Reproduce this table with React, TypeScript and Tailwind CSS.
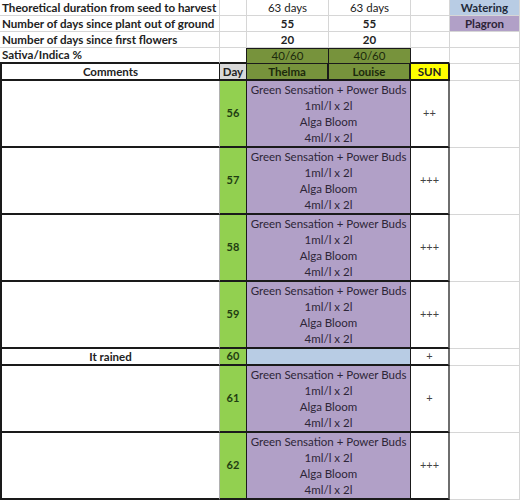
import React from "react";

const GL = "border-[#d6d6d6]";

function Dose() {
  return (
    <div className="flex flex-col items-center leading-[16px] whitespace-nowrap">
      <span>Green Sensation + Power Buds</span>
      <span>1ml/l x 2l</span>
      <span>Alga Bloom</span>
      <span>4ml/l x 2l</span>
    </div>
  );
}

type Row = { day: number; comment?: string; sun: string; rain?: boolean };

const rows: Row[] = [
  { day: 56, sun: "++" },
  { day: 57, sun: "+++" },
  { day: 58, sun: "+++" },
  { day: 59, sun: "+++" },
  { day: 60, sun: "+", comment: "It rained", rain: true },
  { day: 61, sun: "+" },
  { day: 62, sun: "+++" },
];

export default function App() {
  return (
    <div
      className="w-[520px] h-[500px] overflow-hidden bg-white text-[11.5px] text-[#222]"
      style={{ fontFamily: "Lato, 'Liberation Sans', sans-serif" }}
    >
      <div className="grid grid-cols-[220px_27px_82px_82px_39px_70px] grid-rows-[16px_16px_16px_16px_17px_67px_67px_67px_67px_17px_67px_67px]">
        {/* Row 1 */}
        <div className={`border-b border-r ${GL} pl-[2px] font-bold leading-[15px] whitespace-nowrap text-[11.6px]`}>Theoretical duration from seed to harvest</div>
        <div className={`border-b border-r ${GL}`} />
        <div className={`border-b border-r ${GL} flex items-center justify-center`}>63 days</div>
        <div className={`border-b border-r ${GL} flex items-center justify-center`}>63 days</div>
        <div className={`border-b border-r ${GL}`} />
        <div className={`border-b border-r ${GL} bg-[#b8cce4] flex items-center justify-center font-bold text-[#1f2a3a]`}>Watering</div>
        {/* Row 2 */}
        <div className={`border-b border-r ${GL} pl-[2px] font-bold leading-[15px] whitespace-nowrap text-[11.6px]`}>Number of days since plant out of ground</div>
        <div className={`border-b border-r ${GL}`} />
        <div className={`border-b border-r ${GL} flex items-center justify-center font-bold`}>55</div>
        <div className={`border-b border-r ${GL} flex items-center justify-center font-bold`}>55</div>
        <div className={`border-b border-r ${GL}`} />
        <div className={`border-b border-r ${GL} bg-[#b1a0c7] flex items-center justify-center font-bold text-[#2d2438]`}>Plagron</div>
        {/* Row 3 */}
        <div className={`border-b border-r ${GL} pl-[2px] font-bold leading-[15px] whitespace-nowrap text-[11.6px]`}>Number of days since first flowers</div>
        <div className={`border-b border-r ${GL}`} />
        <div className={`border-b border-r ${GL} flex items-center justify-center font-bold`}>20</div>
        <div className={`border-b border-r ${GL} flex items-center justify-center font-bold`}>20</div>
        <div className={`border-b border-r ${GL}`} />
        <div className={`border-b border-r ${GL}`} />
        {/* Row 4 */}
        <div className="border-b-2 border-r border-b-[#1a1a1a] border-r-[#d6d6d6] pl-[2px] font-bold leading-[14px] whitespace-nowrap text-[11.6px]">Sativa/Indica %</div>
        <div className="border-b-2 border-r border-b-[#1a1a1a] border-r-[#1a1a1a]" />
        <div className="border-t border-b border-r border-[#1a1a1a] bg-[#77933c] flex items-center justify-center text-[#1c2a0c]">40/60</div>
        <div className="border-t border-b border-r border-[#1a1a1a] bg-[#77933c] flex items-center justify-center text-[#1c2a0c]">40/60</div>
        <div className="border-b-2 border-r border-b-[#1a1a1a] border-r-[#d6d6d6]" />
        <div className={`border-b border-r ${GL}`} />
        {/* Row 5 header */}
        <div className="border-l-2 border-b-2 border-r border-[#1a1a1a] flex items-center justify-center font-bold">Comments</div>
        <div className="border-b-2 border-r border-[#1a1a1a] bg-[#d9d9d9] flex items-center justify-center font-bold">Day</div>
        <div className="border-b-2 border-r-2 border-[#1a1a1a] bg-[#77933c] flex items-center justify-center font-bold text-[#1c2a0c]">Thelma</div>
        <div className="border-b-2 border-r-2 border-[#1a1a1a] bg-[#77933c] flex items-center justify-center font-bold text-[#1c2a0c]">Louise</div>
        <div className="border-b-2 border-r-2 border-[#1a1a1a] bg-[#ffff00] flex items-center justify-center font-bold">SUN</div>
        <div className={`border-b border-r ${GL}`} />
        {/* Data rows */}
        {rows.map((r) => (
          <React.Fragment key={r.day}>
            <div className="border-l-2 border-b-2 border-r border-l-[#1a1a1a] border-b-[#1a1a1a] border-r-[#b0b0b0] flex items-center justify-center font-bold">
              {r.comment ?? ""}
            </div>
            <div className="border-b-2 border-r border-[#1a1a1a] bg-[#92d050] flex items-center justify-center font-bold text-[#1f3d12] text-[11px]">
              {r.day}
            </div>
            <div
              className={`col-span-2 border-b-2 border-r border-[#1a1a1a] flex items-center justify-center text-[#2e2638] ${
                r.rain ? "bg-[#b8cce4]" : "bg-[#b1a0c7]"
              }`}
            >
              {r.rain ? null : <Dose />}
            </div>
            <div className="border-b-2 border-r-2 border-b-[#1a1a1a] border-r-[#6e6e6e] flex items-center justify-center text-[11px] text-[#444]">
              {r.sun}
            </div>
            <div className={`border-b border-r ${GL}`} />
          </React.Fragment>
        ))}
      </div>
    </div>
  );
}
